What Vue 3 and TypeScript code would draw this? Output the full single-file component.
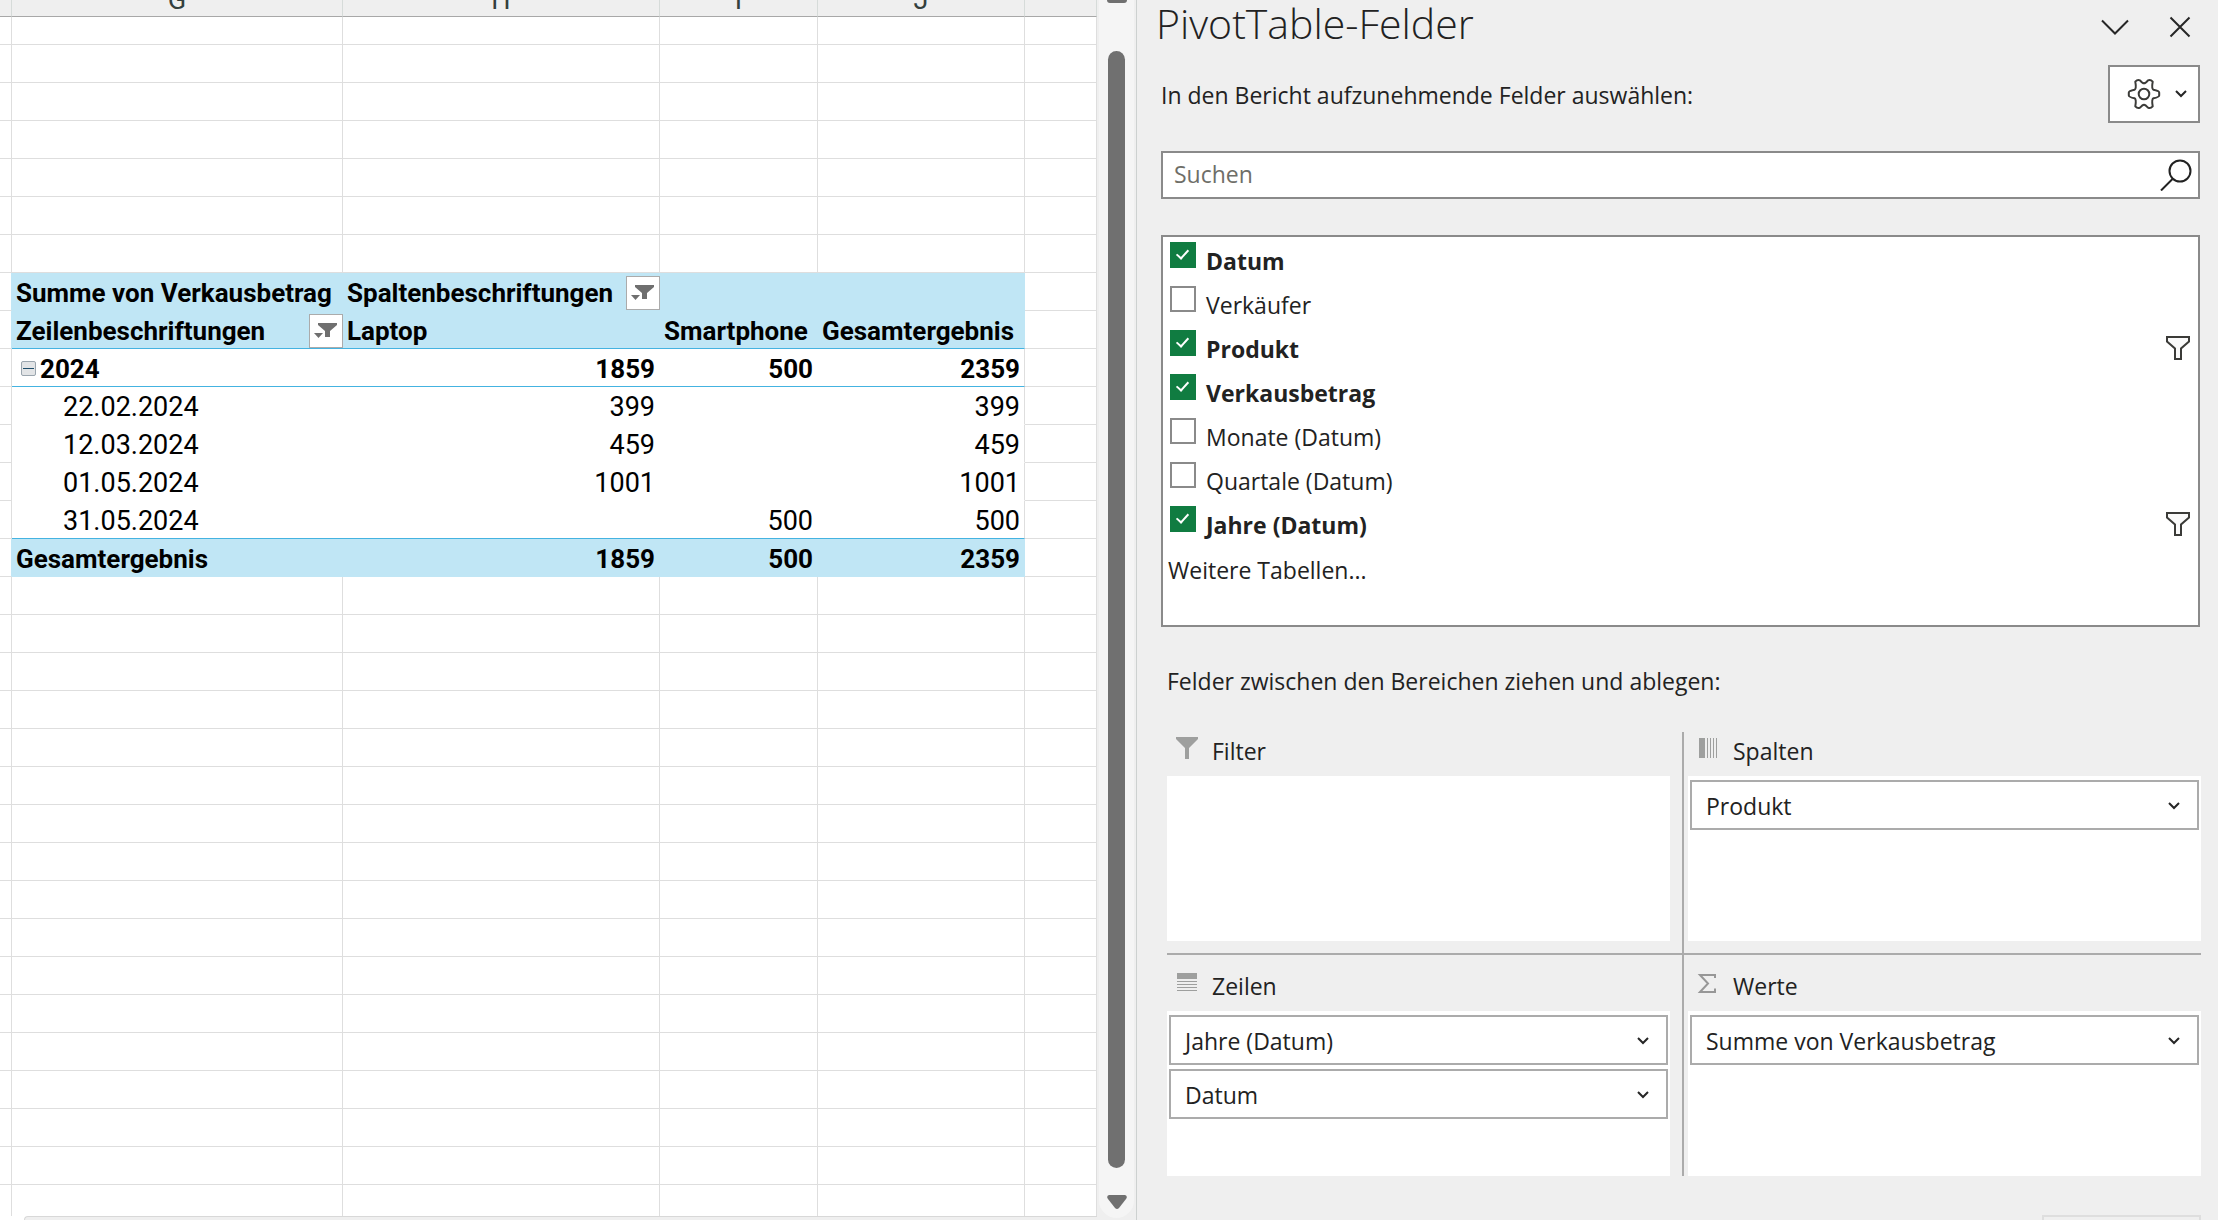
<script setup lang="ts">
import { ref } from 'vue'

interface PivotRow {
  label: string
  kind: 'group' | 'detail' | 'total'
  values: string[]
}
interface Field {
  name: string
  checked: boolean
  filtered?: boolean
}
interface Area {
  title: string
  icon: 'filter' | 'columns' | 'rows' | 'values'
  items: string[]
}

const columns = ['G', 'H', 'I', 'J']
const leadingRows = 7
const trailingRows = 17

const pivotRows: PivotRow[] = [
  { label: '2024', kind: 'group', values: ['1859', '500', '2359'] },
  { label: '22.02.2024', kind: 'detail', values: ['399', '', '399'] },
  { label: '12.03.2024', kind: 'detail', values: ['459', '', '459'] },
  { label: '01.05.2024', kind: 'detail', values: ['1001', '', '1001'] },
  { label: '31.05.2024', kind: 'detail', values: ['', '500', '500'] },
  { label: 'Gesamtergebnis', kind: 'total', values: ['1859', '500', '2359'] },
]

const fields = ref<Field[]>([
  { name: 'Datum', checked: true },
  { name: 'Verkäufer', checked: false },
  { name: 'Produkt', checked: true, filtered: true },
  { name: 'Verkausbetrag', checked: true },
  { name: 'Monate (Datum)', checked: false },
  { name: 'Quartale (Datum)', checked: false },
  { name: 'Jahre (Datum)', checked: true, filtered: true },
])

const areas: Area[] = [
  { title: 'Filter', icon: 'filter', items: [] },
  { title: 'Spalten', icon: 'columns', items: ['Produkt'] },
  { title: 'Zeilen', icon: 'rows', items: ['Jahre (Datum)', 'Datum'] },
  { title: 'Werte', icon: 'values', items: ['Summe von Verkausbetrag'] },
]

const search = ref('')
</script>

<template>
  <div class="app">
    <main class="workbook">
      <div class="sheet">
        <div class="grid-view">
          <table class="grid">
            <colgroup>
              <col class="c-edge" />
              <col class="c-g" />
              <col class="c-h" />
              <col class="c-i" />
              <col class="c-j" />
              <col />
            </colgroup>
            <thead>
              <tr>
                <td></td>
                <th v-for="c in columns" :key="c" scope="col"><span class="letter">{{ c }}</span></th>
                <td></td>
              </tr>
            </thead>
            <tbody>
              <tr v-for="r in leadingRows" :key="'l' + r" :class="{ first: r === 1 }">
                <td v-for="c in 6" :key="c"></td>
              </tr>
              <tr class="pivot head bold">
                <td></td>
                <td>Summe von Verkausbetrag</td>
                <td>
                  <div class="with-filter">
                    <span>Spaltenbeschriftungen</span>
                    <button class="filter-btn" type="button" aria-label="Spaltenbeschriftungen filtern">
                      <svg width="24" height="18" viewBox="0 0 24 18"><path d="M4 1h19v2l-7 6v6h-5V9L4 3z" fill="#6f6f6f" /><path d="M0 11h9l-4.500 5z" fill="#6f6f6f" /></svg>
                    </button>
                  </div>
                </td>
                <td></td>
                <td></td>
                <td></td>
              </tr>
              <tr class="pivot head bold ruled">
                <td></td>
                <td>
                  <div class="with-filter">
                    <span>Zeilenbeschriftungen</span>
                    <button class="filter-btn" type="button" aria-label="Zeilenbeschriftungen filtern">
                      <svg width="24" height="18" viewBox="0 0 24 18"><path d="M4 1h19v2l-7 6v6h-5V9L4 3z" fill="#6f6f6f" /><path d="M0 11h9l-4.500 5z" fill="#6f6f6f" /></svg>
                    </button>
                  </div>
                </td>
                <td>Laptop</td>
                <td>Smartphone</td>
                <td>Gesamtergebnis</td>
                <td></td>
              </tr>
              <tr
                v-for="(row, i) in pivotRows"
                :key="row.label"
                class="pivot"
                :class="[
                  row.kind,
                  { bold: row.kind !== 'detail', ruled: row.kind === 'group' || pivotRows[i + 1]?.kind === 'total' },
                ]"
              >
                <td></td>
                <td>
                  <div class="row-label">
                    <button v-if="row.kind === 'group'" class="collapse" type="button" aria-label="2024 reduzieren"></button>
                    <span>{{ row.label }}</span>
                  </div>
                </td>
                <td v-for="(v, j) in row.values" :key="j" class="num">{{ v }}</td>
                <td></td>
              </tr>
              <tr v-for="r in trailingRows" :key="'t' + r">
                <td v-for="c in 6" :key="c"></td>
              </tr>
            </tbody>
          </table>
        </div>
        <div class="tab-bar"></div>
      </div>
      <div class="scroller">
        <div class="track">
          <svg class="up" width="20" height="3" viewBox="0 0 20 3"><path d="M0 0h20q0 3-3 3H3Q0 3 0 0z" fill="#707070" /></svg>
          <div class="thumb"></div>
          <svg width="20" height="14" viewBox="0 0 20 14"><path d="M2 0h16q3 1 1 4l-7 9q-2 2-4 0L1 4Q-1 1 2 0z" fill="#707070" /></svg>
        </div>
      </div>
    </main>

    <aside class="panel">
      <header class="panel-head">
        <h1>PivotTable-Felder</h1>
        <button class="icon-btn" type="button" aria-label="Aufgabenbereichsoptionen">
          <svg width="28" height="22" viewBox="0 0 28 22"><path d="M1 4.500l13 13 13-13" fill="none" stroke="#262626" stroke-width="2" /></svg>
        </button>
        <button class="icon-btn" type="button" aria-label="Schließen">
          <svg width="22" height="22" viewBox="0 0 22 22"><path d="M1.500 1.500l19 19M20.500 1.500l-19 19" fill="none" stroke="#262626" stroke-width="2" /></svg>
        </button>
      </header>

      <div class="intro">
        <p>In den Bericht aufzunehmende Felder auswählen:</p>
        <button class="tools" type="button" aria-label="Extras">
          <svg width="34" height="34" viewBox="-17 -17 34 34" fill="none" stroke="#3b3b38" stroke-width="2">
            <circle r="5.300" />
            <path
              stroke-linejoin="round"
              d="M-4 -13.700Q-6.500 -14.900 -8.700 -12.300Q-7.400 -5.300 -9.500 -4.200Q-15 -3.200 -15.200 -1.500V1.500Q-15 3.200 -9.500 4.200Q-7.400 5.300 -8.700 12.300Q-6.500 14.900 -4 13.700Q-1.500 10.700 0 10.700Q1.500 10.700 4 13.700Q6.500 14.900 8.700 12.300Q7.400 5.300 9.500 4.200Q15 3.200 15.200 1.500V-1.500Q15 -3.200 9.500 -4.200Q7.400 -5.300 8.700 -12.300Q6.500 -14.900 4 -13.700Q1.500 -10.700 0 -10.700Q-1.500 -10.700 -4 -13.700z"
            />
          </svg>
          <svg width="12" height="8" viewBox="0 0 12 8"><path d="M1 1l5 5 5-5" fill="none" stroke="#262626" stroke-width="2" /></svg>
        </button>
      </div>

      <div class="search">
        <input v-model="search" type="text" placeholder="Suchen" aria-label="Felder suchen" />
        <button class="icon-btn" type="button" aria-label="Suche starten">
          <svg width="32" height="32" viewBox="0 0 32 32"><path d="M12.500 20L1 31.500" stroke="#222" stroke-width="2" /><circle cx="20" cy="12" r="10.500" fill="none" stroke="#222" stroke-width="2" /></svg>
        </button>
      </div>

      <div class="fields">
        <ul>
          <li v-for="f in fields" :key="f.name">
            <label :class="{ bold: f.checked }">
              <input v-model="f.checked" type="checkbox" />
              <span>{{ f.name }}</span>
            </label>
            <svg v-if="f.filtered" class="funnel" width="24" height="24" viewBox="0 0 24 24"><path d="M1 1h22v4.500l-8 7V23H9V12.500l-8-7z" fill="#fafafa" stroke="#3b3b38" stroke-width="2" /></svg>
          </li>
        </ul>
        <a href="#">Weitere Tabellen...</a>
      </div>

      <p class="hint">Felder zwischen den Bereichen ziehen und ablegen:</p>

      <div class="areas">
        <section v-for="a in areas" :key="a.title" class="area">
          <h2>
            <svg v-if="a.icon === 'filter'" width="22" height="22" viewBox="0 0 22 22"><path d="M0 0h22v2l-9 9v11H9V11L0 2z" fill="#9e9f9e" /></svg>
            <svg v-else-if="a.icon === 'columns'" width="22" height="22" viewBox="0 0 22 22"><path d="M2 1h6v20H2zM10 1h1v20h-1zM13 1h1v20h-1zM16 1h1v20h-1zM19 1h1v20h-1z" fill="#9e9f9e" /></svg>
            <svg v-else-if="a.icon === 'rows'" width="22" height="22" viewBox="0 0 22 22"><path d="M1 1h20v6H1zM1 9h20v1H1zM1 12h20v1H1zM1 15h20v1H1zM1 18h20v1H1z" fill="#9e9f9e" /></svg>
            <svg v-else width="22" height="22" viewBox="0 0 22 22"><path d="M18 6V3H3l8 8.500L3 20h15v-3.500" fill="none" stroke="#979797" stroke-width="2" /></svg>
            <span>{{ a.title }}</span>
          </h2>
          <div class="zone">
            <button v-for="item in a.items" :key="item" class="item" type="button">
              <span>{{ item }}</span>
              <svg width="12" height="8" viewBox="0 0 12 8"><path d="M1 1l5 5 5-5" fill="none" stroke="#262626" stroke-width="2" /></svg>
            </button>
          </div>
        </section>
      </div>

      <button class="update" type="button" disabled aria-label="Aktualisieren"></button>
    </aside>
  </div>
</template>

<style>
body {
  margin: 0;
}
</style>

<style scoped>
.app {
  display: grid;
  grid-template-columns: minmax(0, 1136fr) minmax(0, 1082fr);
  height: 100vh;
  overflow: hidden;
  background: #efefef;
  font-family: "Open Sans", "Noto Sans", sans-serif;
  font-size: 23px;
  line-height: 30px;
  color: #222;
}
button {
  margin: 0;
  padding: 0;
  border: 0;
  background: none;
  font: inherit;
  color: inherit;
}
svg {
  display: block;
  flex: none;
}
h1,
h2,
p,
ul {
  margin: 0;
  padding: 0;
  font-weight: 400;
  list-style: none;
}
.bold {
  font-weight: 700;
}

/* Worksheet */
.workbook {
  display: flex;
  min-height: 0;
}
.sheet {
  flex: 1;
  min-width: 0;
  min-height: 0;
  display: flex;
  flex-direction: column;
  background: #fff;
}
.grid-view {
  flex: 1;
  min-height: 0;
  overflow: hidden;
}
.grid {
  width: 100%;
  table-layout: fixed;
  border-collapse: separate;
  border-spacing: 0;
  font-family: Roboto, "Liberation Sans", sans-serif;
  font-size: 27px;
  line-height: 34px;
  color: #000;
}
.c-edge {
  width: 12px;
}
.c-g {
  width: 331px;
}
.c-h {
  width: 317px;
}
.c-i {
  width: 158px;
}
.c-j {
  width: 207px;
}
.grid td,
.grid th {
  box-sizing: border-box;
  height: 38px;
  padding: 2px 4px 0;
  border-right: 1px solid #dedede;
  border-bottom: 1px solid #dedede;
  white-space: nowrap;
  vertical-align: middle;
}
.grid thead td,
.grid thead th {
  height: 17px;
  padding: 0;
  background: #efefef;
  border-right-color: #d6dbd9;
  border-bottom-color: #a8a8a8;
}
.letter {
  display: flex;
  align-items: flex-end;
  justify-content: center;
  height: 16px;
  overflow: hidden;
  font-weight: 400;
  line-height: 32px;
  color: #34403d;
}
.grid .first td {
  height: 28px;
}
.grid .bold td {
  font-size: 26px;
}
.pivot td:nth-child(n + 2):nth-child(-n + 5) {
  border-bottom-color: #fff;
}
.grid .pivot td:nth-child(n + 2):nth-child(-n + 4) {
  padding-right: 5px;
  border-right: 0;
}
.head td:nth-child(n + 2):nth-child(-n + 5),
.total td:nth-child(n + 2):nth-child(-n + 5) {
  background: #c0e6f5;
  border-color: #c0e6f5;
}
.head td:first-child,
.total td:first-child {
  border-right-color: #c0e6f5;
}
.grid .ruled td:nth-child(n + 2):nth-child(-n + 5) {
  border-bottom-color: #44b3e1;
}
.num {
  text-align: right;
}
.with-filter {
  display: flex;
  align-items: center;
  justify-content: space-between;
  margin-right: -5px;
}
.filter-btn {
  display: flex;
  align-items: center;
  justify-content: center;
  box-sizing: border-box;
  width: 34px;
  height: 34px;
  border: 1px solid #ababab;
  background: #fff;
}
.row-label {
  display: flex;
  align-items: center;
}
.detail .row-label {
  padding-left: 47px;
}
.group .row-label {
  gap: 4px;
  padding-left: 5px;
}
.collapse {
  display: flex;
  align-items: center;
  box-sizing: border-box;
  width: 15px;
  height: 15px;
  border: 1px solid #9aa5ae;
  border-radius: 2px;
  background: #e2e4e6;
}
.collapse::before {
  content: "";
  flex: 1;
  height: 1px;
  margin: 0 1px;
  background: #1f4e6b;
}
.tab-bar {
  box-sizing: border-box;
  height: 4px;
  margin-left: 24px;
  border-top: 1px solid #d8d8d8;
  border-left: 1px solid #d8d8d8;
  border-top-left-radius: 6px;
  background: #efefef;
}
.scroller {
  display: flex;
  width: 39px;
}
.track {
  flex: 1;
  display: flex;
  flex-direction: column;
  align-items: center;
  margin: 0 2px 2px;
  padding-bottom: 9px;
  border-radius: 0 0 18px 18px;
  background: #f5f5f5;
}
.thumb {
  flex: 1;
  width: 17px;
  margin: 48px 0 27px;
  border-radius: 9px;
  background: #707070;
}

/* Task pane */
.panel {
  display: flex;
  flex-direction: column;
  min-width: 0;
  overflow: hidden;
  padding: 0 18px 0 19px;
  border-left: 1px solid #cdd1d0;
}
.panel > * {
  flex: none;
}
.panel-head {
  display: flex;
  align-items: center;
  gap: 40px;
  height: 46px;
  padding-right: 9px;
}
.panel-head h1 {
  flex: 1;
  font-size: 41px;
  font-weight: 300;
  line-height: 46px;
}
.panel-head .icon-btn {
  margin-top: 8px;
}
.intro {
  display: flex;
  align-items: center;
  justify-content: space-between;
  margin: 19px 0 0 5px;
}
.intro p {
  padding-top: 2px;
}
.tools {
  display: flex;
  align-items: center;
  justify-content: space-between;
  box-sizing: border-box;
  width: 92px;
  height: 58px;
  padding: 0 11px 0 17px;
  border: 2px solid #8a8a8a;
  background: #fff;
}
.search {
  display: flex;
  align-items: center;
  box-sizing: border-box;
  height: 48px;
  margin: 28px 0 0 5px;
  padding: 0 6px 0 11px;
  border: 2px solid #8a8a8a;
  background: #fff;
}
.search input {
  flex: 1;
  min-width: 0;
  padding: 0 0 2px;
  border: 0;
  outline: 0;
  background: none;
  font: inherit;
  color: inherit;
}
.search input::placeholder {
  color: #6e6e68;
  opacity: 1;
}
.fields {
  box-sizing: border-box;
  min-height: 392px;
  margin: 36px 0 0 5px;
  padding-top: 2px;
  border: 2px solid #8a8a8a;
  background: #fff;
}
.fields li {
  display: flex;
  justify-content: space-between;
  height: 44px;
  padding: 0 8px 0 7px;
  line-height: 44px;
}
.fields label {
  display: flex;
  gap: 10px;
}
.fields input {
  appearance: none;
  position: relative;
  box-sizing: border-box;
  width: 26px;
  height: 26px;
  margin: 3px 0 0;
  border: 2px solid #8a8a8a;
  background: #fff;
}
.fields input:checked {
  border-color: #107c41;
  background: #107c41;
}
.fields input:checked::after {
  content: "";
  position: absolute;
  top: 3px;
  left: 7px;
  width: 5px;
  height: 10px;
  border: solid #fff;
  border-width: 0 2px 2px 0;
  transform: rotate(42deg);
}
.funnel {
  margin-top: 9px;
}
.fields a {
  display: inline-block;
  padding-left: 5px;
  line-height: 46px;
  color: inherit;
  text-decoration: none;
}
.hint {
  margin: 39px 0 0 11px;
}
.areas {
  display: grid;
  grid-template-columns: 1fr 1fr;
  margin: 36px -1px 0 11px;
}
.area {
  padding-bottom: 12px;
}
.area:nth-child(odd) {
  padding-right: 12px;
  border-right: 2px solid #ababab;
}
.area:nth-child(even) {
  padding-left: 4px;
}
.area:nth-child(n + 3) {
  padding-top: 12px;
  padding-bottom: 0;
  border-top: 2px solid #ababab;
}
.area h2 {
  display: flex;
  gap: 14px;
  height: 44px;
  padding-left: 9px;
  font-size: 23px;
  line-height: 38px;
}
.area h2 svg {
  margin-top: 5px;
}
.zone {
  display: flex;
  flex-direction: column;
  gap: 4px;
  box-sizing: border-box;
  min-height: 165px;
  padding: 4px 2px;
  background: #fff;
}
.item {
  display: flex;
  align-items: center;
  justify-content: space-between;
  box-sizing: border-box;
  height: 50px;
  padding: 1px 17px 0 14px;
  border: 2px solid #ababab;
  background: #fff;
  text-align: left;
}
.update {
  align-self: flex-end;
  box-sizing: border-box;
  width: 159px;
  height: 50px;
  margin: 39px -1px 0 0;
  border: 2px solid #dedede;
}
</style>
